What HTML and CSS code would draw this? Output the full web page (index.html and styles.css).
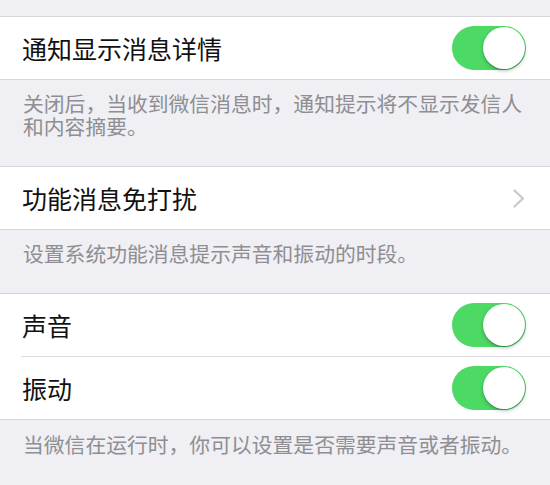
FILE: index.html
```html
<!DOCTYPE html>
<html lang="zh-CN">
<head>
<meta charset="utf-8">
<title>通知设置</title>
<link rel="stylesheet" href="styles.css">
</head>
<body>
<div class="page">
  <div class="top-gap"></div>
  <div class="group">
    <div class="row">
      <span class="label">通知显示消息详情</span>
      <span class="switch on"><span class="knob"></span></span>
    </div>
  </div>
  <div class="footer">关闭后，当收到微信消息时，通知提示将不显示发信人和内容摘要。</div>

  <div class="group">
    <div class="row">
      <span class="label">功能消息免打扰</span>
      <svg class="chevron" width="12" height="19" viewBox="0 0 12 19"><path d="M1.5 1.5 L10 9.5 L1.5 17.5" fill="none" stroke="#c7c7cc" stroke-width="2.2" stroke-linecap="round" stroke-linejoin="round"/></svg>
    </div>
  </div>
  <div class="footer">设置系统功能消息提示声音和振动的时段。</div>

  <div class="group">
    <div class="row">
      <span class="label">声音</span>
      <span class="switch on"><span class="knob"></span></span>
    </div>
    <div class="row inset">
      <span class="label">振动</span>
      <span class="switch on"><span class="knob"></span></span>
    </div>
  </div>
  <div class="footer last">当微信在运行时，你可以设置是否需要声音或者振动。</div>
</div>
</body>
</html>
```

FILE: styles.css
```css
html, body {
  margin: 0;
  padding: 0;
  background: #efeff4;
}

.page {
  width: 550px;
  font-family: "Noto Sans CJK SC", "Noto Sans", sans-serif;
}

.top-gap {
  height: 16px;
}

.group {
  background: #ffffff;
  border-top: 1px solid #d6d6da;
  border-bottom: 1px solid #d6d6da;
}

.row {
  height: 62px;
  display: flex;
  align-items: center;
  justify-content: space-between;
  padding: 0 24px 0 22px;
  position: relative;
}

.row.inset::before {
  content: "";
  position: absolute;
  top: -1px;
  left: 21px;
  right: 0;
  height: 1px;
  background: #dcdce0;
}

.row.inset {
  border-top: 1px solid transparent;
}

.label {
  font-size: 25px;
  color: #111111;
  line-height: 30px;
}

.switch {
  width: 74px;
  height: 44px;
  border-radius: 22px;
  background: #4cd964;
  display: flex;
  align-items: center;
  justify-content: flex-end;
  box-sizing: border-box;
  padding-right: 1px;
}

.knob {
  width: 42px;
  height: 42px;
  border-radius: 50%;
  background: #ffffff;
  box-shadow: 0 1px 1px rgba(30, 110, 50, 0.6), 0 2px 4px rgba(0, 0, 0, 0.2);
}

.chevron {
  display: block;
  margin-right: 1px;
}

.footer {
  font-size: 20.8px;
  line-height: 23px;
  color: #8e8e93;
  padding: 12px 10px 28px 23px;
}

.footer.last {
  padding-top: 13px;
}
```
